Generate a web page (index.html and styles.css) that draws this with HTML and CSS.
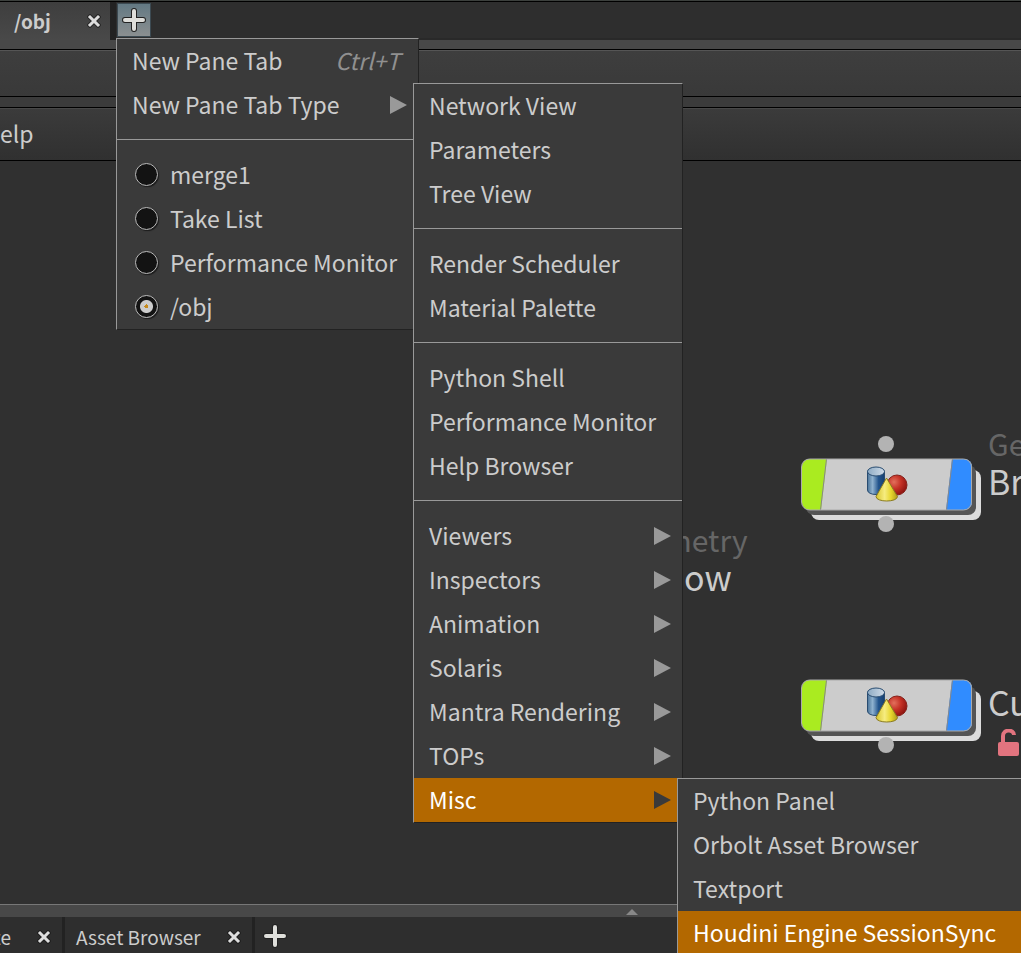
FILE: index.html
```html
<!DOCTYPE html>
<html lang="en">
<head>
<meta charset="utf-8">
<title>Network editor</title>
<link rel="stylesheet" href="styles.css">
</head>
<body>
<svg class="defs" aria-hidden="true">
  <defs>
    <linearGradient id="cyl" x1="0" x2="1"><stop offset="0" stop-color="#4a7398"/><stop offset=".3" stop-color="#8fb2cf"/><stop offset=".65" stop-color="#23558d"/><stop offset="1" stop-color="#163f70"/></linearGradient>
    <linearGradient id="cap" x1="0" x2="1"><stop offset="0" stop-color="#8eabc4"/><stop offset="1" stop-color="#d0dce8"/></linearGradient>
    <linearGradient id="cone" x1="0" x2="1"><stop offset="0" stop-color="#d8c52c"/><stop offset=".4" stop-color="#f6ec80"/><stop offset=".7" stop-color="#e6d52c"/><stop offset="1" stop-color="#b09a18"/></linearGradient>
    <radialGradient id="ball" cx=".35" cy=".35" r=".7"><stop offset="0" stop-color="#e2705c"/><stop offset=".5" stop-color="#c53226"/><stop offset="1" stop-color="#8c130f"/></radialGradient>
    <symbol id="node" viewBox="0 0 182 90">
      <rect x="10" y="25" width="170" height="50" rx="8" fill="#dcdcdc"/>
      <rect x="5" y="20" width="170" height="50" rx="8" fill="#555"/>
      <rect x="1" y="14" width="170" height="51" rx="8" fill="#ccc"/>
      <path d="M9 14H26L20 65H9a8 8 0 0 1-8-8V22a8 8 0 0 1 8-8z" fill="#aaeb20"/>
      <path d="M151 14h12a8 8 0 0 1 8 8v35a8 8 0 0 1-8 8h-18z" fill="#308cff"/>
      <path d="M25.500 14l-6 51M151.500 14l-6 51" stroke="#888" fill="none"/>
      <rect x=".5" y="14" width="170" height="51" rx="8" fill="none" stroke="#aaa"/>
      <path d="M66.500 26v19c0 6 17 6 17 0v-19z" fill="url(#cyl)" stroke="#294c70"/>
      <ellipse cx="75" cy="26.500" rx="8.500" ry="4.500" fill="url(#cap)" stroke="#294c70"/>
      <circle cx="96" cy="40" r="10" fill="url(#ball)" stroke="#86231c"/>
      <path d="M85.500 33L75 51.500c0 6 21.500 6 21.500 0z" fill="url(#cone)" stroke="#8a7b22"/>
    </symbol>
    <symbol id="cross" viewBox="0 0 14 14"><path d="M3 3l8 8M11 3l-8 8" stroke="#161616" stroke-opacity=".6" stroke-width="5" stroke-linecap="square"/><path d="M3 3l8 8M11 3l-8 8" stroke="#ddd" stroke-width="3" stroke-linecap="square"/></symbol>
    <symbol id="plus" viewBox="0 0 24 24"><path d="M12 3v18M3 12h18" stroke="#222" stroke-width="6" stroke-linecap="round"/><path d="M12 3v18M3 12h18" stroke="#dfdfdb" stroke-width="4" stroke-linecap="round"/></symbol>
  </defs>
</svg>
<div class="app">
  <div class="edge"></div>
  <div class="tabs">
    <div class="tab tab-active"><span>/obj</span><button class="close" aria-label="Close /obj"><svg><use href="#cross"/></svg></button></div>
    <div class="add-wrap">
      <button class="add add-open" aria-label="New tab"><svg><use href="#plus"/></svg></button>
      <ul class="menu menu-root">
        <li><button class="item">New Pane Tab <kbd>Ctrl+T</kbd></button></li>
        <li><button class="item">New Pane Tab Type <i class="arrow"></i></button>
          <ul class="menu submenu">
            <li><button class="item">Network View</button></li>
            <li><button class="item">Parameters</button></li>
            <li><button class="item">Tree View</button></li>
            <li class="sep"></li>
            <li><button class="item">Render Scheduler</button></li>
            <li><button class="item">Material Palette</button></li>
            <li class="sep"></li>
            <li><button class="item">Python Shell</button></li>
            <li><button class="item">Performance Monitor</button></li>
            <li><button class="item">Help Browser</button></li>
            <li class="sep"></li>
            <li><button class="item">Viewers <i class="arrow"></i></button></li>
            <li><button class="item">Inspectors <i class="arrow"></i></button></li>
            <li><button class="item">Animation <i class="arrow"></i></button></li>
            <li><button class="item">Solaris <i class="arrow"></i></button></li>
            <li><button class="item">Mantra Rendering <i class="arrow"></i></button></li>
            <li><button class="item">TOPs <i class="arrow"></i></button></li>
            <li><button class="item selected">Misc <i class="arrow"></i></button>
              <ul class="menu submenu submenu-wide">
                <li><button class="item">Python Panel</button></li>
                <li><button class="item">Orbolt Asset Browser</button></li>
                <li><button class="item">Textport</button></li>
                <li><button class="item selected">Houdini Engine SessionSync</button></li>
              </ul>
            </li>
          </ul>
        </li>
        <li class="sep"></li>
        <li><label class="item choice"><input type="radio" name="pane">merge1</label></li>
        <li><label class="item choice"><input type="radio" name="pane">Take List</label></li>
        <li><label class="item choice"><input type="radio" name="pane">Performance Monitor</label></li>
        <li><label class="item choice"><input type="radio" name="pane" checked>/obj</label></li>
      </ul>
    </div>
  </div>
  <div class="path-top"></div>
  <div class="toolbar"></div>
  <div class="gap"></div>
  <nav class="menubar"><button>elp</button></nav>
  <main class="canvas">
    <div class="caption caption-left"><span class="kind">metry</span><span>ow</span></div>
    <svg class="node node-a"><use href="#node"/><circle cx="85" cy="-1" r="8"/><circle cx="85" cy="79" r="8"/></svg>
    <div class="caption caption-a"><span class="kind">Ge</span><span>Br</span></div>
    <svg class="node node-b"><use href="#node"/><circle cx="85" cy="79" r="8"/></svg>
    <div class="caption caption-b"><span>Cu</span>
      <svg class="lock" viewBox="0 0 22 28"><path d="M6 14V7c0-7 11-7 11-1" fill="none" stroke="#e2747f" stroke-width="4"/><rect x="1" y="13" width="21" height="14" rx="2" fill="#e2747f"/></svg>
    </div>
  </main>
  <div class="splitter"><i></i></div>
  <div class="tabs tabs-bottom">
    <div class="tab tab-cut"><span>te</span><button class="close" aria-label="Close"><svg><use href="#cross"/></svg></button></div>
    <div class="tab tab-asset"><span>Asset Browser</span><button class="close" aria-label="Close Asset Browser"><svg><use href="#cross"/></svg></button></div>
    <button class="add" aria-label="New tab"><svg><use href="#plus"/></svg></button>
  </div>
</div>
</body>
</html>
```
FILE: styles.css
```css
* { box-sizing: border-box; }
body {
  margin: 0;
  height: 100vh;
  overflow: hidden;
  background: #2f2f2f;
  color: #ccc;
  font-family: "Noto Sans CJK SC", "Noto Sans", sans-serif;
  font-size: 23px;
}
button { border: 0; padding: 0; background: none; color: inherit; font: inherit; }
ul { list-style: none; margin: 0; padding: 0; }
.defs { position: absolute; width: 0; height: 0; }
.app { display: flex; flex-direction: column; height: 100vh; }
.app > * { flex-shrink: 0; }
.edge { height: 2px; background: #3c403d; border-bottom: 1px solid #000; }

.tabs { display: flex; height: 38px; background: #2e2e2e; font-size: 19px; box-shadow: inset 0 -2px #292929; }
.tab { display: flex; align-items: center; justify-content: space-between; border-right: 6px solid #222; }
.tab span { line-height: 30px; }
.tab-active { width: 116px; padding: 0 9px 0 14px; background: linear-gradient(#3e3e3e, #494949); font-weight: bold; }
.close { width: 14px; height: 14px; display: flex; }
.close svg { width: 14px; height: 14px; }
.add-wrap { position: relative; }
.add { width: 34px; height: 34px; display: grid; place-items: center; }
.add svg { width: 24px; height: 24px; }
.add-open { margin: 1px 0 0 1px; border: 1px solid #3c4a52; background: linear-gradient(#637983, #8b8f90); }

.menu {
  position: absolute;
  background: #3a3a3a;
  border: 1px solid #999;
  border-right-color: #222;
  border-bottom-color: #222;
  color: #ccc;
  font-size: 23px;
  z-index: 2;
}
.menu-root { top: 36px; left: 0; width: 303px; }
.submenu { top: 0; left: calc(100% - 5px); width: 270px; }
.submenu-wide { width: 380px; }
.menu li { position: relative; }
.item { display: flex; align-items: center; width: 100%; height: 44px; padding: 0 11px 3px 15px; white-space: nowrap; text-align: left; }
.item kbd { margin-left: auto; margin-right: 7px; font: inherit; font-style: italic; color: #909090; }
.arrow { margin: 3px 0 0 auto; border: solid transparent; border-width: 9px 0 9px 17px; border-left-color: #999; }
.selected { background: #b36800; color: #fff; }
.selected .arrow { border-left-color: #3a3a3a; }
.sep { height: 26px; padding-top: 12px; }
.sep::before { content: ""; display: block; height: 1px; background: #999; }
.choice { padding: 0 11px 3px 18px; gap: 12px; }
.choice input {
  appearance: none;
  flex: none;
  width: 23px;
  height: 23px;
  margin: 2px 0 0;
  border: 1px solid #bbb;
  border-radius: 50%;
  background: #131313;
  box-shadow: 1px 1px 1px #1c1c1c;
}
.choice input:checked { background: radial-gradient(circle, #c68a1c 0 2px, #ccc 2px 6px, #131313 7px); }

.path-top { height: 10px; background: #484848; border-bottom: 1px solid #000; }
.toolbar { height: 47px; background: linear-gradient(#3e3e3e, #393939); border-top: 1px solid #555; border-bottom: 1px solid #000; }
.gap { height: 11px; background: #3b3b3b; border-bottom: 1px solid #000; }
.menubar { display: flex; align-items: center; height: 53px; padding-bottom: 4px; background: linear-gradient(#3b3b3b, #303030); border-top: 1px solid #484848; border-bottom: 1px solid #000; }

.canvas { position: relative; flex: 1; min-height: 0; overflow: hidden; background: #303030; }
.node { position: absolute; left: 801px; width: 182px; height: 90px; overflow: visible; }
.node circle { fill: #b3b3b3; }
.node-a { top: 284px; }
.node-b { top: 505px; }
.caption { position: absolute; display: flex; flex-direction: column; font-size: 34px; line-height: 38px; }
.kind { color: #666; font-size: 30px; }
.caption-left { top: 359px; left: 664px; }
.caption-left span:last-child { margin-left: 20px; }
.caption-a { top: 263px; left: 988px; }
.caption-b { top: 522px; left: 988px; }
.lock { width: 22px; height: 28px; margin: 8px 0 0 9px; }

.splitter { display: flex; height: 13px; background: #484848; border-top: 1px solid #777; }
.splitter i { margin: 4px 0 0 626px; height: 6px; border: solid transparent; border-width: 0 6px 6px; border-bottom-color: #888; }
.tabs-bottom { height: 36px; box-shadow: none; }
.tab-cut, .tab-asset { padding: 4px 11px 0 0; border-right-width: 3px; }
.tab-cut { width: 65px; justify-content: flex-end; gap: 26px; }
.tab-asset { width: 190px; padding-left: 11px; }
.tabs-bottom .add { margin: 2px 0 0 3px; }
```
